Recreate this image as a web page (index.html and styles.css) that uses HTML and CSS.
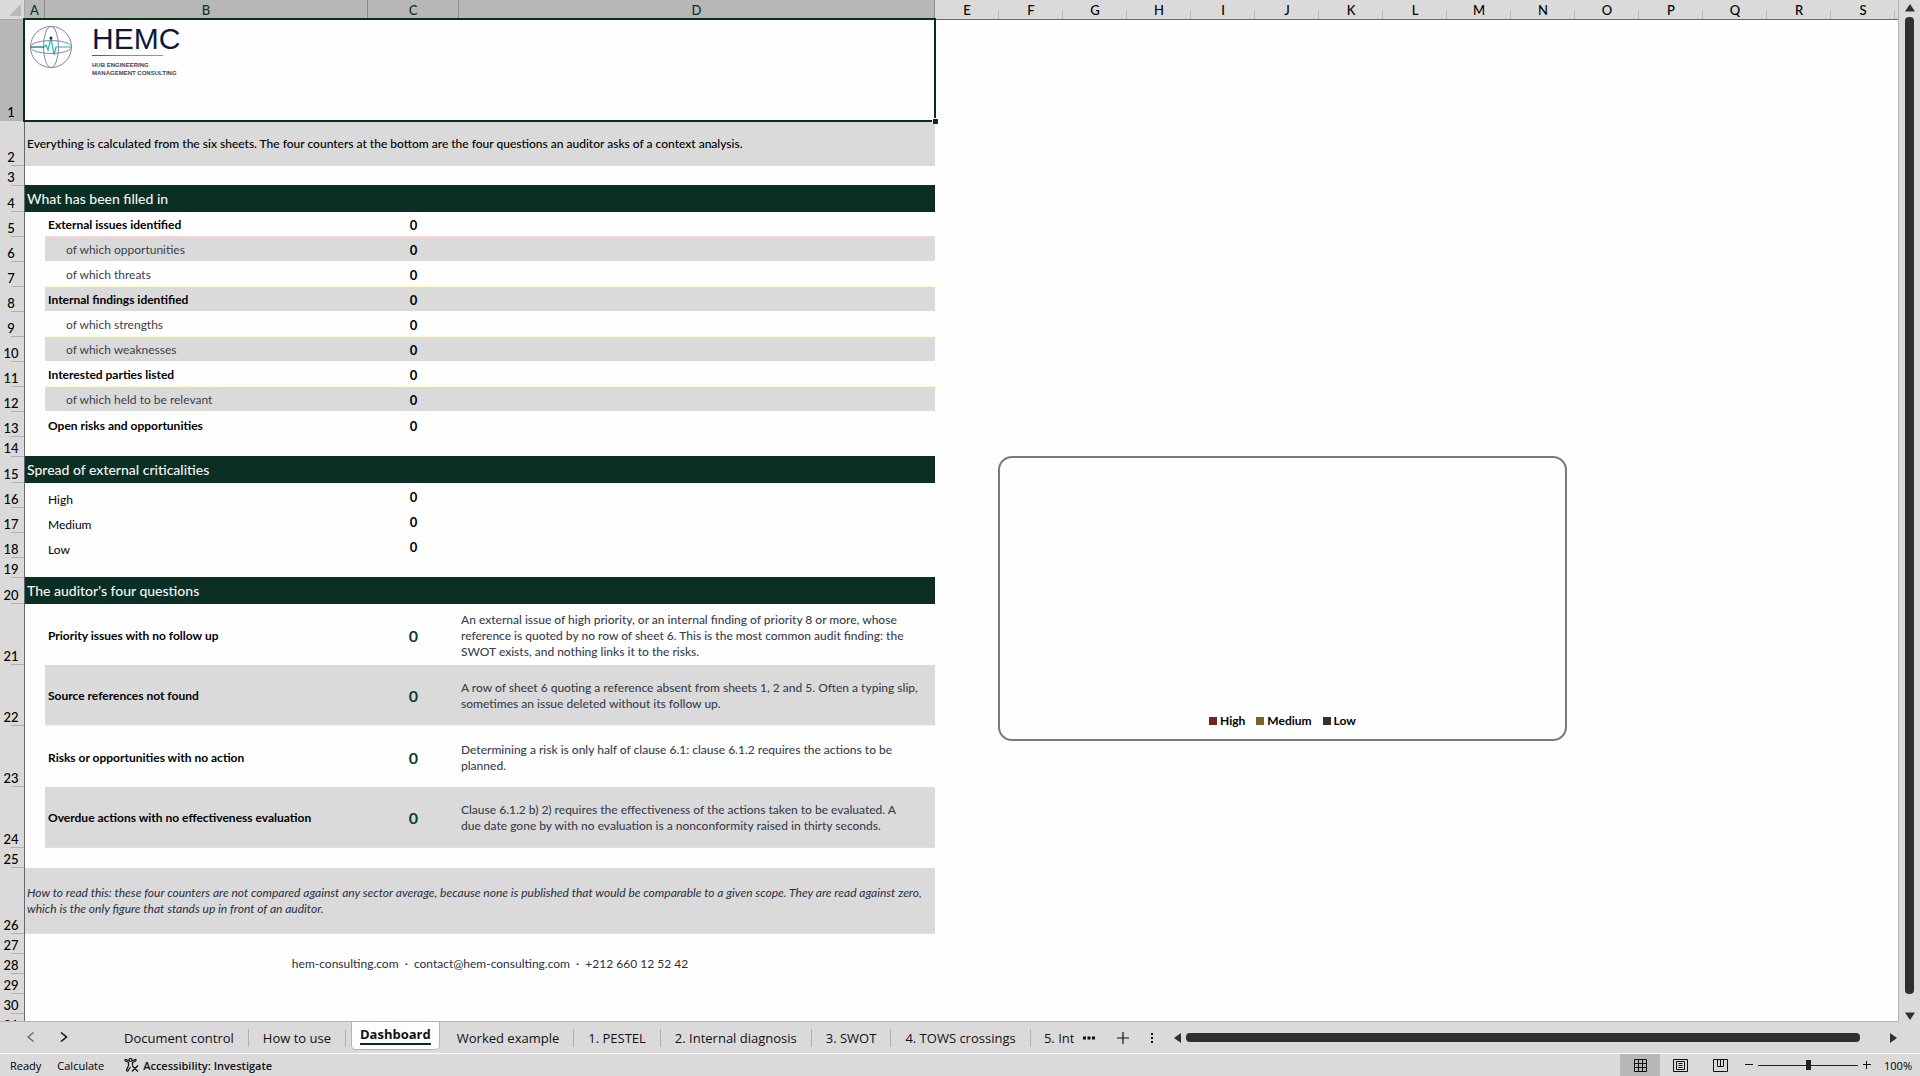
FILE: index.html
```html
<!DOCTYPE html>
<html lang="en">
<head>
  <meta charset="UTF-8">
  <meta name="viewport" content="width=device-width, initial-scale=1.0">
  <title>Dashboard</title>
  <link rel="stylesheet" href="styles.css">
</head>
<body>
  <main class="workspace">
    <div class="sheet">
      <table class="grid">
        <colgroup>
          <col class="col-num">
          <col class="col-a">
          <col class="col-b">
          <col class="col-c">
          <col class="col-d">
          <col span="15" class="col-std">
          <col>
        </colgroup>
        <thead>
          <tr>
            <th class="corner"><svg width="12" height="12" viewBox="0 0 12 12"><path d="M12 0v12H0z" fill="#b9b9b9"/></svg></th>
            <th class="sel">A</th><th class="sel">B</th><th class="sel">C</th><th class="sel">D</th>
            <th>E</th><th>F</th><th>G</th><th>H</th><th>I</th><th>J</th><th>K</th><th>L</th><th>M</th><th>N</th><th>O</th><th>P</th><th>Q</th><th>R</th><th>S</th><th class="last"></th>
          </tr>
        </thead>
        <tbody>
          <tr class="row-logo">
            <th class="sel">1</th>
            <td colspan="4" class="selected">
              <div class="logo">
                <svg class="globe" width="44" height="44" viewBox="0 0 44 44" fill="none" stroke="#8088a8">
                  <circle cx="22" cy="22" r="20.5"/>
                  <ellipse cx="22" cy="22" rx="7.500" ry="20.500"/>
                  <ellipse cx="22" cy="22" rx="20.500" ry="6.500"/>
                  <path d="M1.500 22H15" stroke="#116466" stroke-width="1.200"/>
                  <path d="M15 22l2-2 2 5 3-12 3 17 2-8 1 0h14" stroke="#2ab5b5" stroke-width="1.200"/>
                  <circle cx="22" cy="13" r="1.500" fill="#0b2b3f" stroke="none"/>
                </svg>
                <div class="brand">
                  <div class="brand-name">HEMC</div>
                  <div class="brand-line"></div>
                  <div class="brand-sub">HUB ENGINEERING<br>MANAGEMENT CONSULTING</div>
                </div>
              </div>
              <span class="handle"></span>
            </td>
            <td colspan="16"></td>
          </tr>
          <tr class="row-intro"><th>2</th><td colspan="4" class="fill">Everything is calculated from the six sheets. The four counters at the bottom are the four questions an auditor asks of a context analysis.</td><td colspan="16"></td></tr>
          <tr><th>3</th><td colspan="20"></td></tr>
          <tr class="row-title"><th>4</th><td colspan="4" class="title">What has been filled in</td><td colspan="16"></td></tr>
          <tr class="row-item pink"><th>5</th><td></td><td class="strong">External issues identified</td><td class="count">0</td><td></td><td colspan="16"></td></tr>
          <tr class="row-item band"><th>6</th><td></td><td class="sub">of which opportunities</td><td class="count">0</td><td></td><td colspan="16"></td></tr>
          <tr class="row-item cream"><th>7</th><td></td><td class="sub">of which threats</td><td class="count">0</td><td></td><td colspan="16"></td></tr>
          <tr class="row-item band"><th>8</th><td></td><td class="strong">Internal findings identified</td><td class="count">0</td><td></td><td colspan="16"></td></tr>
          <tr class="row-item cream"><th>9</th><td></td><td class="sub">of which strengths</td><td class="count">0</td><td></td><td colspan="16"></td></tr>
          <tr class="row-item band"><th>10</th><td></td><td class="sub">of which weaknesses</td><td class="count">0</td><td></td><td colspan="16"></td></tr>
          <tr class="row-item cream"><th>11</th><td></td><td class="strong">Interested parties listed</td><td class="count">0</td><td></td><td colspan="16"></td></tr>
          <tr class="row-item band"><th>12</th><td></td><td class="sub">of which held to be relevant</td><td class="count">0</td><td></td><td colspan="16"></td></tr>
          <tr class="row-item"><th>13</th><td></td><td class="strong">Open risks and opportunities</td><td class="count">0</td><td></td><td colspan="16"></td></tr>
          <tr><th>14</th><td colspan="20"></td></tr>
          <tr class="row-title"><th>15</th><td colspan="4" class="title">Spread of external criticalities</td><td colspan="16"></td></tr>
          <tr class="row-item"><th>16</th><td></td><td class="level">High</td><td class="count">0</td><td></td><td colspan="16"></td></tr>
          <tr class="row-item"><th>17</th><td></td><td class="level">Medium</td><td class="count">0</td><td></td><td colspan="16"></td></tr>
          <tr class="row-item"><th>18</th><td></td><td class="level">Low</td><td class="count">0</td><td></td><td colspan="16"></td></tr>
          <tr><th>19</th><td colspan="20"></td></tr>
          <tr class="row-title"><th>20</th><td colspan="4" class="title">The auditor's four questions</td><td colspan="16"></td></tr>
          <tr class="row-question"><th>21</th><td></td><td class="strong">Priority issues with no follow up</td><td class="count">0</td><td class="note">An external issue of high priority, or an internal finding of priority 8 or more, whose<br>reference is quoted by no row of sheet 6. This is the most common audit finding: the<br>SWOT exists, and nothing links it to the risks.</td><td colspan="16"></td></tr>
          <tr class="row-question band cream"><th>22</th><td></td><td class="strong">Source references not found</td><td class="count">0</td><td class="note">A row of sheet 6 quoting a reference absent from sheets 1, 2 and 5. Often a typing slip,<br>sometimes an issue deleted without its follow up.</td><td colspan="16"></td></tr>
          <tr class="row-question"><th>23</th><td></td><td class="strong">Risks or opportunities with no action</td><td class="count">0</td><td class="note">Determining a risk is only half of clause 6.1: clause 6.1.2 requires the actions to be<br>planned.</td><td colspan="16"></td></tr>
          <tr class="row-question band pink"><th>24</th><td></td><td class="strong">Overdue actions with no effectiveness evaluation</td><td class="count">0</td><td class="note">Clause 6.1.2 b) 2) requires the effectiveness of the actions taken to be evaluated. A<br>due date gone by with no evaluation is a nonconformity raised in thirty seconds.</td><td colspan="16"></td></tr>
          <tr><th>25</th><td colspan="20"></td></tr>
          <tr class="row-help"><th>26</th><td colspan="4" class="fill">How to read this: these four counters are not compared against any sector average, because none is published that would be comparable to a given scope. They are read against zero,<br>which is the only figure that stands up in front of an auditor.</td><td colspan="16"></td></tr>
          <tr><th>27</th><td colspan="20"></td></tr>
          <tr><th>28</th><td></td><td colspan="3" class="contact">hem-consulting.com &nbsp;·&nbsp; contact@hem-consulting.com &nbsp;·&nbsp; +212 660 12 52 42</td><td colspan="16"></td></tr>
          <tr><th>29</th><td colspan="20"></td></tr>
          <tr><th>30</th><td colspan="20"></td></tr>
          <tr><th>31</th><td colspan="20"></td></tr>
        </tbody>
      </table>

      <!-- chart floating over the cells, no data yet -->
      <div class="chart">
        <ul class="legend">
          <li><span class="key high"></span>High</li>
          <li><span class="key medium"></span>Medium</li>
          <li><span class="key low"></span>Low</li>
        </ul>
      </div>
    </div>

    <div class="vscroll">
      <svg width="10" height="8" viewBox="0 0 10 8"><path d="M5 0l5 7.500H0z" fill="#303030"/></svg>
      <div class="vthumb"></div>
      <svg width="10" height="8" viewBox="0 0 10 8"><path d="M0 .5h10L5 8z" fill="#303030"/></svg>
    </div>
  </main>

  <nav class="tabbar">
    <div class="arrows">
      <button aria-label="Previous sheet"><svg width="8" height="10" viewBox="0 0 8 10" fill="none" stroke="#666" stroke-width="1.300"><path d="M6.500.5L1 5l5.500 4.500"/></svg></button>
      <button aria-label="Next sheet"><svg width="8" height="10" viewBox="0 0 8 10" fill="none" stroke="#111" stroke-width="1.500"><path d="M1 .5L6.500 5 1 9.500"/></svg></button>
    </div>
    <div class="tabs">
      <button class="tab">Document control</button>
      <button class="tab">How to use</button>
      <button class="tab active"><span>Dashboard</span></button>
      <button class="tab">Worked example</button>
      <button class="tab">1. PESTEL</button>
      <button class="tab">2. Internal diagnosis</button>
      <button class="tab">3. SWOT</button>
      <button class="tab">4. TOWS crossings</button>
      <button class="tab cut">5. Int</button>
    </div>
    <div class="tab-tools">
      <button aria-label="More sheets"><svg width="12" height="4" viewBox="0 0 12 4" fill="#111"><path d="M0 .5h3v3H0zM4.500.5h3v3h-3zM9 .5h3v3H9z"/></svg></button>
      <button aria-label="New sheet"><svg width="12" height="12" viewBox="0 0 12 12" stroke="#111" stroke-width="1.200"><path d="M6 0v12M0 6h12"/></svg></button>
      <button aria-label="Resize"><svg width="2" height="10" viewBox="0 0 2 10" fill="#111"><path d="M0 0h2v2H0zM0 4h2v2H0zM0 8h2v2H0z"/></svg></button>
    </div>
    <div class="hscroll">
      <svg width="7" height="10" viewBox="0 0 7 10"><path d="M7 0v10L0 5z" fill="#303030"/></svg>
      <div class="hthumb"></div>
      <svg width="7" height="10" viewBox="0 0 7 10"><path d="M0 0v10l7-5z" fill="#303030"/></svg>
    </div>
  </nav>

  <footer class="status">
    <span class="state">Ready</span>
    <span class="state">Calculate</span>
    <button class="access">
      <svg width="15" height="14" viewBox="0 0 15 14" fill="none" stroke="#111" stroke-width="1.200">
        <circle cx="6.500" cy="2" r="1.500"/>
        <path d="M5 3L2 1.500C.8 1.200.5 2.500 1.500 3L4.500 4.500v3l-2 4.500c0 1.300 1.300 1.300 1.700.5L6.500 9M8 3l3-1.500c1.200-.3 1.500 1 .5 1.500l-3 1.500v2.500M8 7.500l6 6M14 7.500l-6 6"/>
      </svg>
      Accessibility: Investigate
    </button>
    <div class="views">
      <button class="on" aria-label="Normal"><svg width="15" height="13" viewBox="0 0 15 13" fill="none" stroke="#111"><path d="M1.500.5h12v12h-12zM1.500 4.500h12M1.500 8.500h12M5.500.5v12M9.500.5v12"/></svg></button>
      <button aria-label="Page layout"><svg width="15" height="13" viewBox="0 0 15 13" fill="none" stroke="#111"><path d="M.5.5h14v12H.5zM3.500 2.500h8v8h-8zM5.500 4.500h4M5.500 6.500h4M5.500 8.500h4"/></svg></button>
      <button aria-label="Page break preview"><svg width="15" height="13" viewBox="0 0 15 13" fill="none" stroke="#111"><path d="M.5.5h14v12H.5zM4.500.5v7h6v-7M7.500.5v7"/></svg></button>
    </div>
    <div class="zoom">
      <button aria-label="Zoom out"><svg width="8" height="8" viewBox="0 0 8 8" stroke="#111"><path d="M0 3.500h8"/></svg></button>
      <input type="range" min="0" max="100" value="50" aria-label="Zoom">
      <button aria-label="Zoom in"><svg width="8" height="8" viewBox="0 0 8 8" stroke="#111"><path d="M0 3.500h8M3.500 0v8"/></svg></button>
      <span class="percent">100%</span>
    </div>
  </footer>
</body>
</html>
```
FILE: styles.css
```css
* {
  box-sizing: border-box;
}

body {
  display: flex;
  flex-direction: column;
  height: 100vh;
  margin: 0;
  overflow: hidden;
  background-color: #dadada;
  color: #000;
  font-family: Lato, "Liberation Sans", sans-serif;
  font-size: 12px;
}

button {
  display: flex;
  align-items: center;
  justify-content: center;
  margin: 0;
  padding: 0;
  border: none;
  background: none;
  color: #111;
  font: inherit;
  cursor: pointer;
}

svg {
  display: block;
}

/* sheet */
.workspace {
  display: flex;
  flex: 1;
  min-height: 0;
}

.sheet {
  position: relative;
  flex: 1;
  min-width: 0;
  overflow: hidden;
  background-color: #fefefe;
  border-right: 1px solid #b5b5b5;
  border-bottom: 1px solid #b5b5b5;
}

.grid {
  width: 100%;
  table-layout: fixed;
  border-collapse: separate;
  border-spacing: 0;
}

.col-num {
  width: 25px;
}

.col-a {
  width: 20px;
}

.col-b {
  width: 323px;
}

.col-c {
  width: 91px;
}

.col-d {
  width: 476px;
}

.col-std {
  width: 64px;
}

.grid tr {
  height: 20px;
}

.grid th,
.grid td {
  padding: 0;
  text-align: left;
  line-height: 16px;
  white-space: nowrap;
}

.grid thead th {
  height: 20px;
  border-bottom: 1px solid #666;
  background: linear-gradient(#b5b5b5, #b5b5b5) right bottom / 1px 8px no-repeat #dadada;
  font-size: 13px;
  font-weight: 500;
  text-align: center;
}

.grid thead th.sel {
  border-right: 1px solid #8c8c8c;
  background: #b7b7b7;
  color: #0b3323;
}

.grid thead th.last {
  background: #dadada;
}

.grid thead .corner {
  border-color: #a5a5a5;
  border-right: 1px solid #a5a5a5;
  background: #dadada;
}

.corner svg {
  margin-left: 9px;
}

.grid tbody th {
  padding: 0 2px 1px 0;
  border-right: 1px solid #666;
  background: linear-gradient(#b0b0b0, #b0b0b0) right bottom / 13px 1px no-repeat #dadada;
  font-size: 13px;
  font-weight: 500;
  text-align: center;
  vertical-align: bottom;
}

.grid tbody th.sel {
  background-color: #b7b7b7;
}

.grid .row-logo {
  height: 101px;
}

.grid .row-intro {
  height: 45px;
}

.grid .row-title {
  height: 26px;
}

.grid .row-item {
  height: 25px;
}

.grid .row-question {
  height: 61px;
}

.grid .row-help {
  height: 66px;
}

.row-item td,
.row-question td {
  padding-top: 2px;
}

.grid .selected {
  position: relative;
  vertical-align: top;
}

.selected::after {
  content: "";
  position: absolute;
  inset: -2px -1px -1px -2px;
  border: 2px solid #06301a;
}

.handle {
  position: absolute;
  right: -3px;
  bottom: -3px;
  z-index: 1;
  width: 6px;
  height: 6px;
  border: 1px solid #fefefe;
  border-width: 1px 0 0 1px;
  background-color: #06301a;
}

.logo {
  display: flex;
  gap: 19px;
  padding: 5px 4px;
}

.brand {
  padding-top: 1px;
  color: #0a1a3f;
  font-family: "Liberation Sans", Arial, sans-serif;
}

.brand-name {
  font-size: 30px;
  line-height: 26px;
}

.brand-line {
  width: 71px;
  height: 1px;
  margin: 3px 0 5px;
  background: linear-gradient(to right, #2d6a5a, #2ab5b5, #4aa8ff);
}

.brand-sub {
  font-size: 6px;
  font-weight: 700;
  line-height: 8px;
  color: #3a4560;
}

.grid .fill {
  padding: 0 2px;
  background-color: #dadada;
}

.row-intro .fill {
  font-weight: 500;
}

.grid .row-help .fill {
  border-bottom: 1px solid #ffd6d6;
  color: #2a2f3f;
  font-style: italic;
}

.grid .title {
  padding: 0 2px;
  background-color: #0b2f24;
  box-shadow: 0 -1px #0b2f24;
  color: #f4f4f4;
  font-size: 14px;
  font-weight: 500;
}

.band td:nth-child(n+3):nth-child(-n+5) {
  background-color: #dadada;
  border-bottom: 1px solid #fefefe;
}

.pink td:nth-child(n+3):nth-child(-n+5) {
  border-bottom: 1px solid #ffd6d6;
}

.cream td:nth-child(n+3):nth-child(-n+5) {
  border-bottom: 1px solid #fbfbd0;
}

.grid .strong {
  padding: 2px 0 0 3px;
  font-weight: 700;
}

.grid .sub {
  padding: 2px 0 0 21px;
  color: #3a3f4f;
}

.grid .level {
  padding-left: 3px;
  vertical-align: bottom;
}

.grid .count {
  font-weight: 700;
  font-size: 13px;
  text-align: center;
}

.grid .row-question .count {
  color: #0b3d2a;
  font-size: 16px;
}

.grid .note {
  padding-left: 2px;
  color: #3a3f4f;
  font-weight: 500;
}

.grid .contact {
  color: #2a2f3f;
  text-align: center;
}

.chart {
  position: absolute;
  top: 456px;
  left: 998px;
  display: flex;
  align-items: flex-end;
  justify-content: center;
  width: 569px;
  height: 285px;
  padding-bottom: 10px;
  border: 2px solid #7a7a7a;
  border-radius: 14px;
}

.legend {
  display: flex;
  gap: 11px;
  margin: 0;
  padding: 0;
  list-style: none;
  font-weight: 700;
  line-height: 16px;
}

.legend li {
  display: flex;
  align-items: center;
  gap: 3px;
}

.key {
  width: 8px;
  height: 8px;
}

.high {
  background-color: #6b2a1c;
}

.medium {
  background-color: #7d6030;
}

.low {
  background-color: #303238;
}

.vscroll {
  display: flex;
  flex-direction: column;
  align-items: center;
  width: 21px;
  padding: 4px 0 2px;
}

.vthumb {
  flex: 1;
  width: 9px;
  margin: 5px 0 18px;
  border-radius: 4px;
  background-color: #303030;
}

/* sheet tabs */
.tabbar {
  display: flex;
  height: 32px;
  border-bottom: 1px solid #fefefe;
  font-family: "Open Sans", "Noto Sans", sans-serif;
  font-size: 13px;
}

.arrows {
  display: flex;
  align-items: center;
  gap: 25px;
  padding: 0 42px 1px 27px;
}

.tabs {
  display: flex;
  min-width: 0;
}

.tab {
  height: 18px;
  margin-top: 7px;
  padding: 0 14px;
  border-right: 1px solid #b0b0b0;
  line-height: 18px;
  white-space: nowrap;
}

.tab.active {
  height: 29px;
  margin: -1px 3px 0 5px;
  padding: 0 8px;
  border: 1px solid #b5b5b5;
  border-top: none;
  border-radius: 0 0 5px 5px;
  background-color: #fefefe;
  font-weight: 700;
}

.active span {
  border-bottom: 2px solid #06301a;
}

.tab.cut {
  width: 43px;
  padding-right: 0;
  border-right: none;
  overflow: hidden;
}

.tab-tools {
  display: flex;
  align-items: center;
  gap: 22px;
  padding: 0 21px 0 9px;
}

.hscroll {
  display: flex;
  flex: 1;
  align-items: center;
  gap: 5px;
  padding-right: 23px;
}

.hthumb {
  flex: 1;
  height: 9px;
  margin-right: 25px;
  border-radius: 4px;
  background-color: #303030;
}

/* status bar */
.status {
  display: flex;
  align-items: center;
  height: 22px;
  padding-left: 10px;
  font-family: "Open Sans", "Noto Sans", sans-serif;
  font-size: 11px;
}

.state {
  margin-right: 16px;
}

.access {
  gap: 4px;
  padding-left: 4px;
  font-weight: 600;
}

.views {
  display: flex;
  align-self: stretch;
  margin-left: auto;
}

.views button {
  width: 40px;
}

.views .on {
  background-color: #b7b7b7;
}

.zoom {
  display: flex;
  align-items: center;
  gap: 5px;
  padding: 0 8px 0 5px;
}

.zoom input {
  width: 100px;
  height: 12px;
  margin: 0;
  background: linear-gradient(#222, #222) center / 100% 1px no-repeat;
  appearance: none;
}

.zoom input::-webkit-slider-thumb {
  width: 5px;
  height: 10px;
  background-color: #222;
  appearance: none;
}

.percent {
  padding-left: 8px;
}
```
